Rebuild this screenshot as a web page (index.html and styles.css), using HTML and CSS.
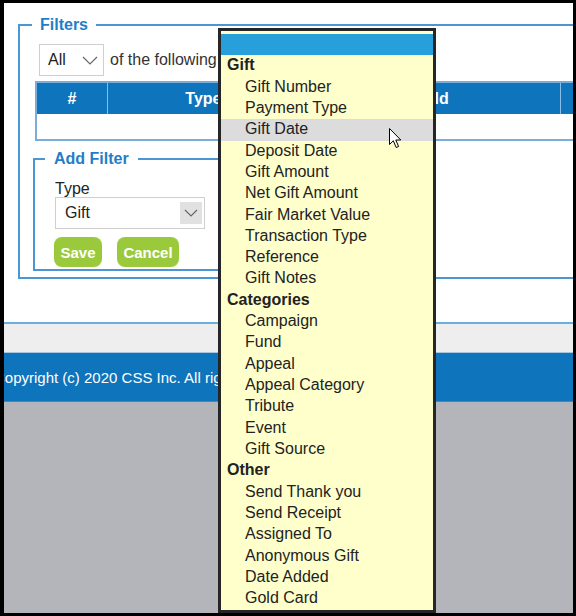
FILE: index.html
```html
<!DOCTYPE html>
<html lang="en">
<head>
  <meta charset="UTF-8" />
  <meta name="viewport" content="width=device-width, initial-scale=1.0" />
  <title>Filters</title>
  <link rel="stylesheet" href="styles.css">
</head>
<body>
  <div class="frame">
    <div class="content">
      <fieldset class="filters">
        <legend>Filters</legend>

        <div class="match-row">
          <div class="select-box match">
            <span>All</span>
            <svg class="chevron" width="16" height="9" viewBox="0 0 16 9"><polyline points="1,1 8,8 15,1" fill="none" stroke="#666" stroke-width="1.2"/></svg>
          </div>
          <span class="match-text">of the following conditions</span>
        </div>

        <table class="criteria">
          <tr class="head">
            <th class="col-num">#</th>
            <th class="col-type">Type</th>
            <th class="col-field">Field</th>
            <th class="col-rest"></th>
          </tr>
          <tr class="empty">
            <td colspan="4"></td>
          </tr>
        </table>

        <fieldset class="add-filter">
          <legend>Add Filter</legend>
          <label class="field-label">Type</label>
          <div class="select-box gift">
            <span>Gift</span>
            <span class="arrow-btn">
              <svg width="14" height="8" viewBox="0 0 14 8"><polyline points="1,1 7,7 13,1" fill="none" stroke="#666" stroke-width="1.2"/></svg>
            </span>
          </div>
          <div class="buttons">
            <button class="btn save">Save</button>
            <button class="btn cancel">Cancel</button>
          </div>
        </fieldset>
      </fieldset>
    </div>

    <div class="sub-bar"></div>
    <div class="footer"><span class="copy">Copyright (c) 2020 CSS Inc. All rights reserved.</span></div>
    <div class="backdrop"></div>

    <!-- open type list -->
    <ul class="dropdown">
      <li class="selected"></li>
      <li class="group">Gift</li>
      <li>Gift Number</li>
      <li>Payment Type</li>
      <li class="hover">Gift Date</li>
      <li>Deposit Date</li>
      <li>Gift Amount</li>
      <li>Net Gift Amount</li>
      <li>Fair Market Value</li>
      <li>Transaction Type</li>
      <li>Reference</li>
      <li>Gift Notes</li>
      <li class="group">Categories</li>
      <li>Campaign</li>
      <li>Fund</li>
      <li>Appeal</li>
      <li>Appeal Category</li>
      <li>Tribute</li>
      <li>Event</li>
      <li>Gift Source</li>
      <li class="group">Other</li>
      <li>Send Thank you</li>
      <li>Send Receipt</li>
      <li>Assigned To</li>
      <li>Anonymous Gift</li>
      <li>Date Added</li>
      <li>Gold Card</li>
    </ul>

    <svg class="cursor" width="14" height="21" viewBox="0 0 14 21">
      <path d="M0.5,0.5 V16.5 L4.3,12.8 L7.2,19.5 L9.6,18.5 L6.8,12 H11.8 Z" fill="#fff" stroke="#000" stroke-width="1" stroke-linejoin="miter"/>
    </svg>
  </div>
</body>
</html>
```

FILE: styles.css
```css
* {
  box-sizing: border-box;
}
body {
  margin: 0;
  font-family: "Liberation Sans", Arial, sans-serif;
  color: #222;
}
.frame {
  position: relative;
  width: 576px;
  height: 616px;
  border-style: solid;
  border-color: #000;
  border-width: 3px 3px 3px 4px;
  overflow: hidden;
  display: flex;
  flex-direction: column;
}
.content {
  background: #fff;
  height: 321px;
  flex-shrink: 0;
  padding-top: 13px;
  border-bottom: 2px solid #6aaee0;
}

/* fieldsets */
fieldset {
  border: 2px solid #4b96d3;
  margin: 0;
  min-width: 0;
}
legend {
  color: #1f7ec8;
  font-weight: bold;
  font-size: 16px;
}
.filters {
  margin: 0 -80px 0 14px;
  padding: 0 0 6px 15px;
}
.filters > legend {
  margin-left: -3px;
  padding: 0 8px;
}
.match-row {
  display: flex;
  align-items: center;
  margin: 10px 0 0 4px;
  font-size: 16px;
}
.select-box {
  display: flex;
  align-items: center;
  height: 32px;
  border: 1px solid #cfcfcf;
  background: #fff;
  font-size: 16px;
}
.select-box.match {
  width: 65px;
  padding: 0 5px 0 8px;
  justify-content: space-between;
}
.match-text {
  margin-left: 6px;
  color: #333;
  white-space: nowrap;
}

/* criteria table */
.criteria {
  border-collapse: collapse;
  margin-top: 5px;
  border: 2px solid #7aaed9;
}
.criteria th {
  background: #0e74bc;
  color: #fff;
  font-size: 16px;
  height: 32px;
  padding: 0;
  border-left: 1px solid #8cbde6;
}
.criteria th:first-child {
  border-left: none;
}
.col-num { width: 72px; }
.col-type { width: 193px; }
.col-field { width: 263px; }
.col-rest { width: 90px; }
.criteria td {
  height: 26px;
  background: #fff;
}

/* add filter */
.add-filter {
  margin: 9px 0 0 -2px;
  padding: 0 0 2px 20px;
  width: 380px;
}
.add-filter > legend {
  margin-left: -10px;
  padding: 0 9px;
}
.field-label {
  display: block;
  font-size: 16px;
  line-height: 17px;
  margin-top: 12px;
}
.select-box.gift {
  width: 150px;
  padding: 0 2px 0 9px;
  justify-content: space-between;
}
.arrow-btn {
  display: flex;
  align-items: center;
  justify-content: center;
  width: 22px;
  height: 22px;
  background: #e1e1e1;
}
.buttons {
  display: flex;
  gap: 15px;
  margin-top: 8px;
  margin-left: -1px;
}
.btn {
  height: 30px;
  border: none;
  border-radius: 8px;
  background: #9bc93c;
  color: #fff;
  font-family: "Liberation Sans", Arial, sans-serif;
  font-weight: bold;
  font-size: 15px;
  padding: 0;
}
.btn.save { width: 48px; }
.btn.cancel { width: 62px; }

/* bottom bands */
.sub-bar {
  height: 29px;
  flex-shrink: 0;
  background: #eeeeee;
  border-bottom: 1px solid #a9c6de;
}
.footer {
  height: 49px;
  flex-shrink: 0;
  background: #0e74bc;
  border-bottom: 1px solid #7a7a7a;
  display: flex;
  align-items: center;
  color: #fff;
  font-size: 15px;
  white-space: nowrap;
}
.copy {
  margin-left: -10px;
}
.backdrop {
  flex: 1;
  background: #b4b5ba;
}

/* open dropdown list */
.dropdown {
  position: absolute;
  left: 214px;
  top: 25px;
  width: 218px;
  height: 585px;
  margin: 0;
  padding: 3px 0 0;
  list-style: none;
  background: #ffffcc;
  border: 3px solid #262626;
  font-size: 16px;
}
.dropdown li {
  height: 21.32px;
  line-height: 19px;
  padding-left: 24px;
  white-space: nowrap;
}
.dropdown li.group {
  padding-left: 6px;
  font-weight: bold;
}
.dropdown li.selected {
  background: #279fda;
}
.dropdown li.hover {
  background: #dcdcdc;
}
.cursor {
  position: absolute;
  left: 385px;
  top: 125px;
}
```
